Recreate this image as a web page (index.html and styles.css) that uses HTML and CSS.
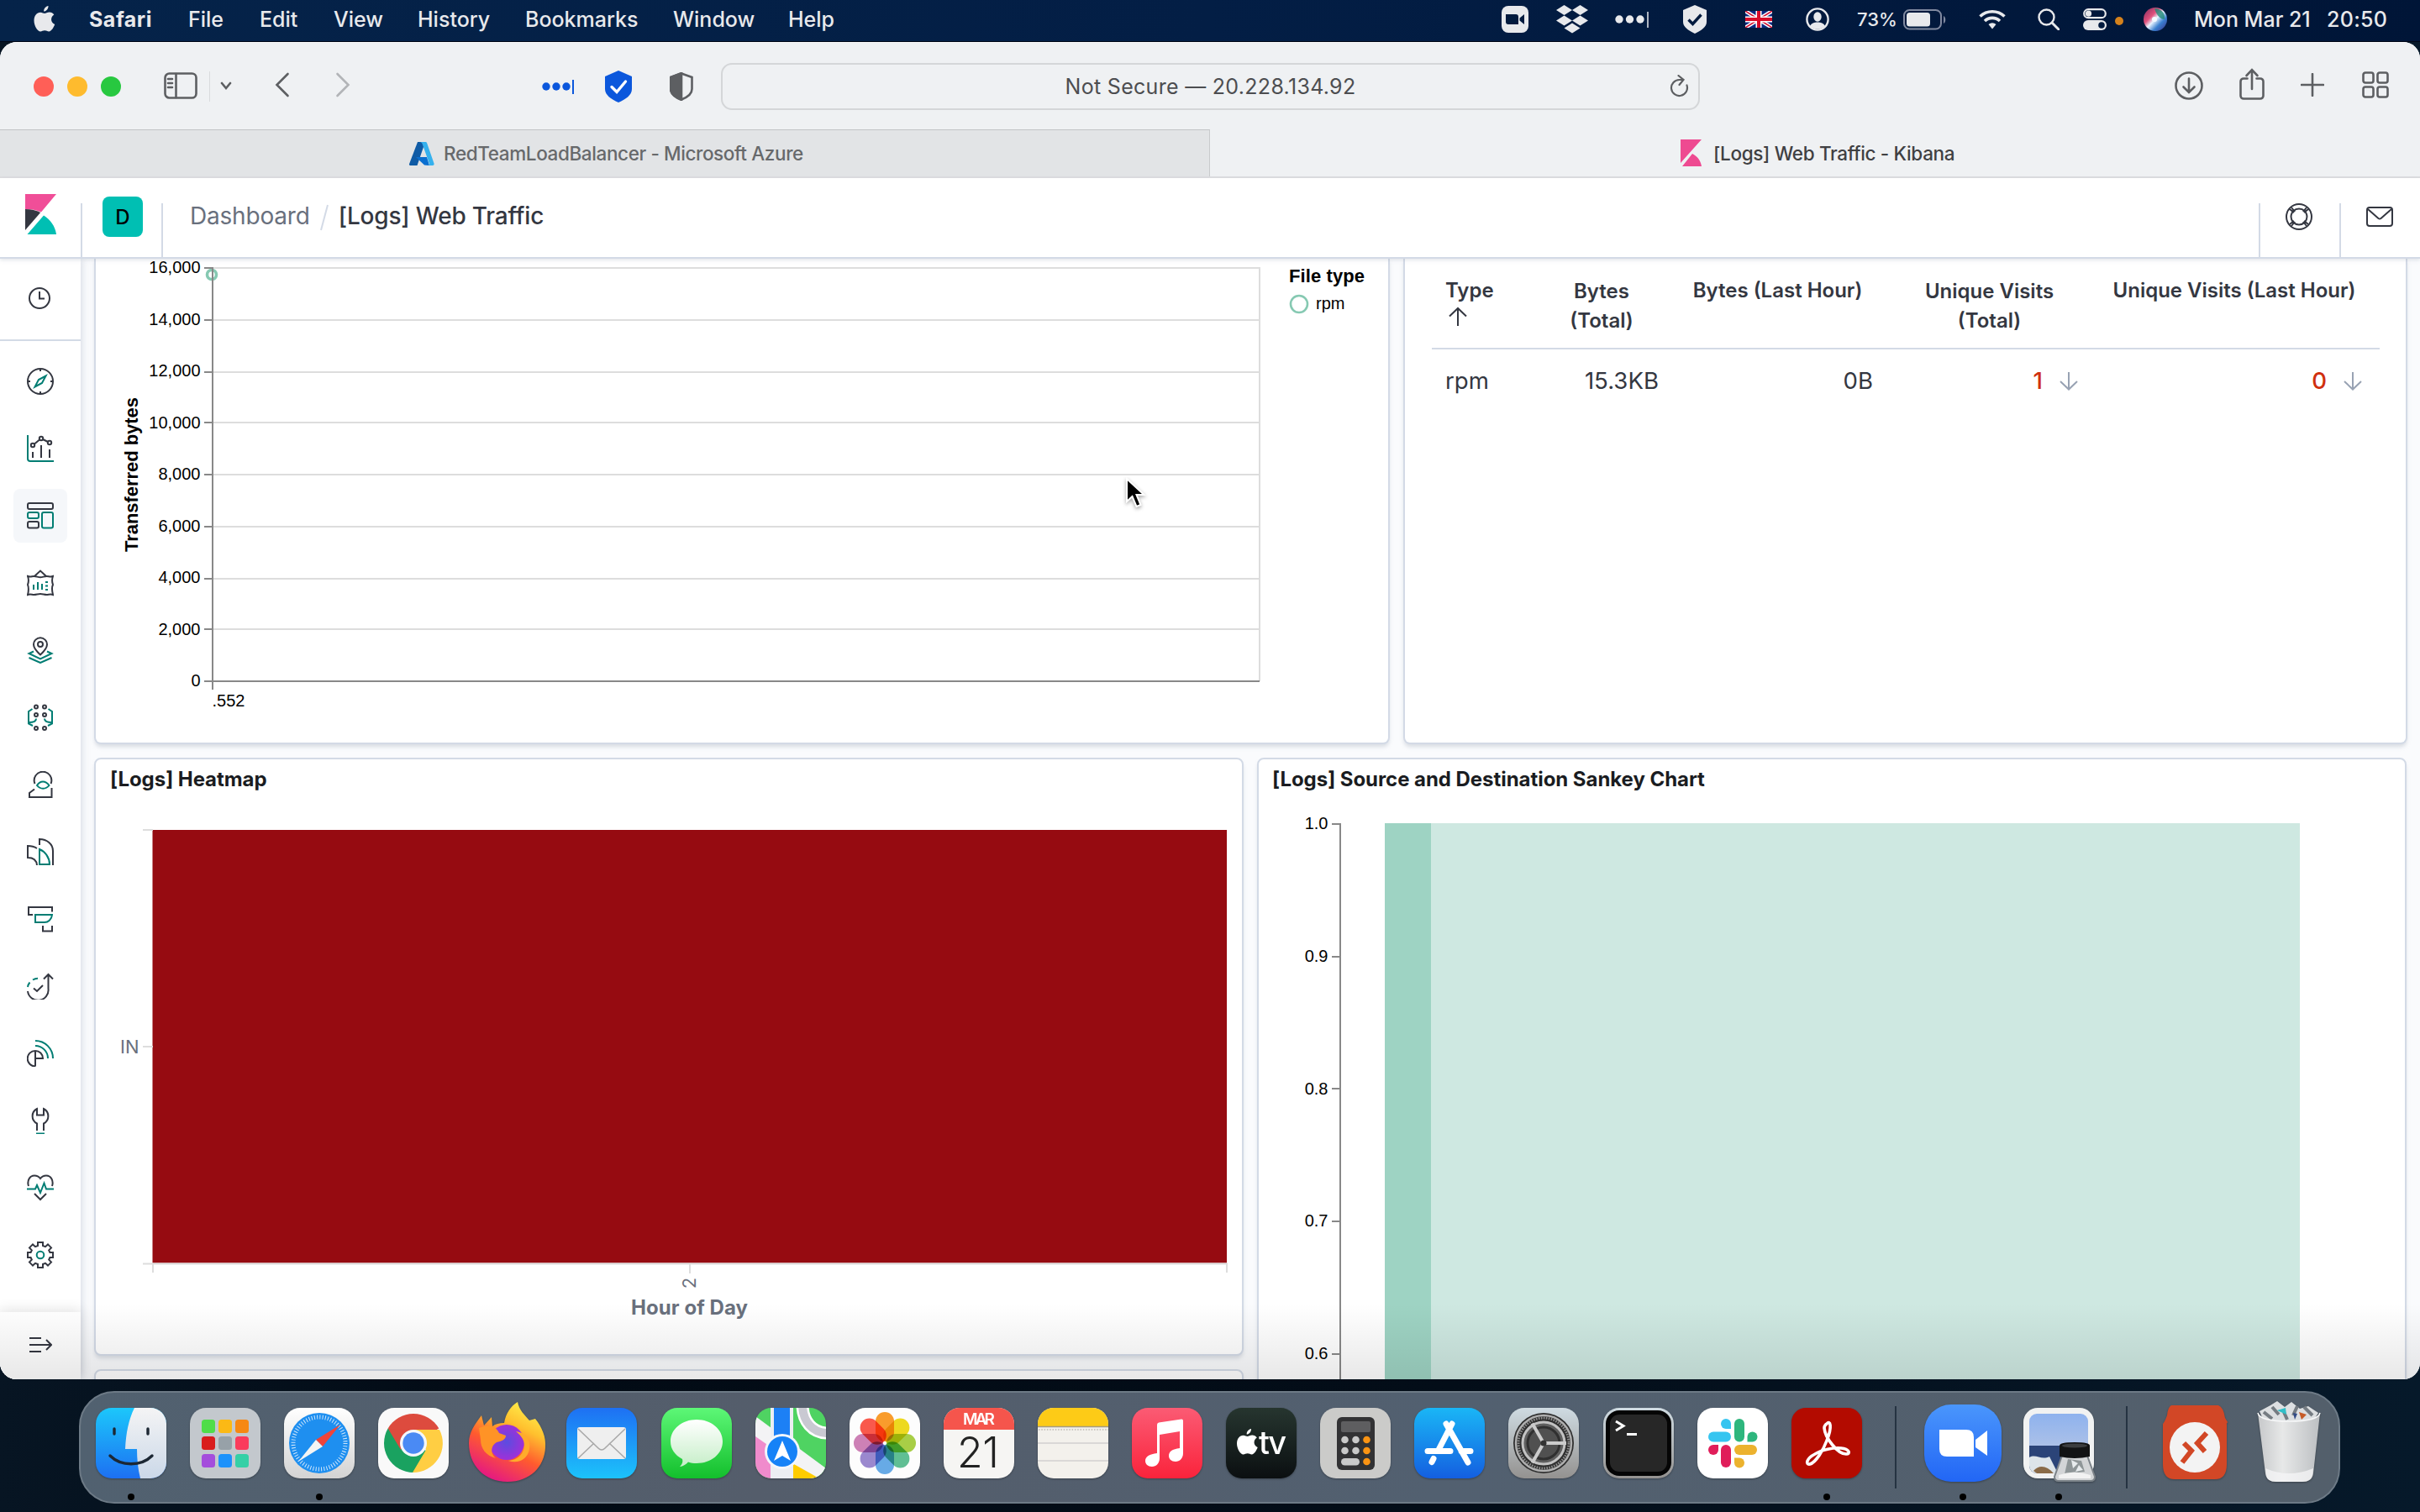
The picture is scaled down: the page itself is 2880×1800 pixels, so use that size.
FILE: index.html
```html
<!DOCTYPE html>
<html lang="en">
<head>
<meta charset="utf-8">
<title>[Logs] Web Traffic - Kibana</title>
<link rel="stylesheet" href="styles.css">
</head>
<body>
<div class="desktop">

<header class="menubar">
  <svg class="apple" viewBox="0 0 26 32"><path d="M18 0c.3 3-2.300 6.500-5.300 6.600C12.300 3.600 15 .5 18 0zM13.500 9c1.500 0 3.200-1.500 5.800-1.500 2.300.1 4.300 1.200 5.500 3-4.800 3-4 9.500.9 11.500-1 3-4 8.500-7 8.500-2 0-2.700-1.200-5-1.200S10.500 30.500 8.700 30.500C5 30.500 1 23.500 1 17.500 1 11.500 4.500 7.700 8.500 7.700c2.300 0 3.800 1.300 5 1.300z"/></svg>
  <nav class="menus">
    <span class="menu app">Safari</span><span class="menu">File</span><span class="menu">Edit</span><span class="menu">View</span><span class="menu">History</span><span class="menu">Bookmarks</span><span class="menu">Window</span><span class="menu">Help</span>
  </nav>
  <div class="status">
    <svg class="st-zoom" viewBox="0 0 32 32"><rect width="32" height="32" rx="8"/><path class="cut" d="M5 10h12a3 3 0 0 1 3 3v9H8a3 3 0 0 1-3-3zM21.500 14.500 27 10v12l-5.500-4.500z"/></svg>
    <svg class="st-drop" viewBox="0 0 38 34"><path d="M9.500 0 19 6l-9.500 6L0 6zM28.500 0 38 6l-9.500 6L19 6zM9.500 12.500l9.500 6-9.500 6-9.500-6zM28.500 12.500l9.500 6-9.500 6-9.500-6zM19 21.500l9.500 6-9.500 6-9.500-6z"/></svg>
    <svg class="st-dots" viewBox="0 0 42 20"><circle cx="5" cy="10" r="4.700"/><circle cx="17.500" cy="10" r="4.700"/><circle cx="30" cy="10" r="4.700"/><path d="M38 1h2v19h-2z" opacity=".75"/></svg>
    <svg class="st-shield" viewBox="0 0 30 34"><path d="M15 0l14 6v14c0 6-6 10-14 14C7 30 1 26 1 20V6z"/><path class="tick" d="M7.500 17.500l5 5 10-11"/></svg>
    <svg class="st-flag" viewBox="0 0 32 20"><rect width="32" height="20" fill="#0b2a80"/><path d="M0 0l32 20M32 0L0 20" stroke="#fff" stroke-width="4.500"/><path d="M0 0l32 20M32 0L0 20" stroke="#d01030" stroke-width="1.500"/><path d="M16 0v20M0 10h32" stroke="#fff" stroke-width="7"/><path d="M16 0v20M0 10h32" stroke="#d80d2a" stroke-width="4"/></svg>
    <svg class="st-user" viewBox="0 0 28 28"><circle cx="14" cy="14" r="12.600" fill="none" stroke="#e8e9ec" stroke-width="2.400"/><ellipse cx="14" cy="11" rx="4.700" ry="5.700"/><path d="M5 22c2-3.500 5-4.500 9-4.500s7 1 9 4.500c-5 5-13 5-18 0z"/></svg>
    <span class="battery-text">73%</span>
    <svg class="st-batt" viewBox="0 0 52 25"><rect x="1" y="1" width="44" height="22.500" rx="6.500" fill="none" stroke="#8089a0" stroke-width="2"/><rect x="4" y="4" width="28" height="16.500" rx="3.500"/><path d="M48 8c3 1 3 8 0 9z" fill="#8089a0"/></svg>
    <svg class="st-wifi" viewBox="0 0 34 24"><path d="M17 23.500l-4.500-5.500a7 7 0 0 1 9 0z"/><path class="arc" d="M8 14a13 13 0 0 1 18 0M2.500 8.500a21 21 0 0 1 29 0"/></svg>
    <svg class="st-search" viewBox="0 0 26 26"><circle cx="10.500" cy="10.500" r="9" fill="none" stroke="#e8e9ec" stroke-width="2.400"/><path d="M17 17l8 8" stroke="#e8e9ec" stroke-width="3" stroke-linecap="round"/></svg>
    <svg class="st-cc" viewBox="0 0 28 26"><rect x="1.200" y="1.200" width="25.600" height="10" rx="5" fill="none" stroke="#e8e9ec" stroke-width="2.200"/><circle cx="6.500" cy="6.200" r="3.600"/><rect y="14" width="28" height="12" rx="6"/><circle class="cut" cx="22" cy="20" r="3.800"/></svg>
    <span class="rec-dot"></span>
    <svg class="st-siri" viewBox="0 0 28 28"><defs><linearGradient id="siri" x1="0" y1="0" x2="1" y2="1"><stop offset="0" stop-color="#7d2a5c"/><stop offset=".35" stop-color="#e0507c"/><stop offset=".5" stop-color="#e9f4ff"/><stop offset=".7" stop-color="#3a7fd0"/><stop offset="1" stop-color="#3b2a80"/></linearGradient></defs><circle cx="14" cy="14" r="14" fill="url(#siri)"/><path d="M13 1c9 0 13 7 12 13-4 0-9-3-12-13z" fill="#1f8a78" opacity=".8"/><circle cx="13" cy="14" r="3" fill="#f4faff"/></svg>
    <span class="date">Mon Mar 21</span><span class="time">20:50</span>
  </div>
</header>

<main class="window">
  <div class="toolbar">
    <div class="lights"><i class="red"></i><i class="yellow"></i><i class="green"></i></div>
    <svg class="tb-side" viewBox="0 0 40 32"><rect x="1.500" y="1.500" width="37" height="29" rx="5"/><path d="M14.500 2v28M5 8h5M5 13h5M5 18h5"/></svg>
    <i class="tb-sep"></i>
    <svg class="tb-chev" viewBox="0 0 14 10"><path d="M2 2l5 6 5-6"/></svg>
    <svg class="tb-back" viewBox="0 0 18 30"><path d="M15.500 2 2.500 15l13 13"/></svg>
    <svg class="tb-fwd" viewBox="0 0 18 30"><path d="M2.500 2l13 13-13 13"/></svg>
    <svg class="tb-dots" viewBox="0 0 40 18"><circle cx="5" cy="9" r="4.700"/><circle cx="17" cy="9" r="4.700"/><circle cx="29" cy="9" r="4.700"/><path d="M36 1h2v17h-2z"/></svg>
    <svg class="tb-shield" viewBox="0 0 32 38"><path d="M16 0l16 7v15c0 7-7 12-16 16C7 34 0 29 0 22V7z" fill="#0b57dc" stroke="none"/><path d="M8 19.500l6 6L24.500 13" fill="none" stroke="#fff" stroke-width="3.400"/></svg>
    <svg class="tb-half" viewBox="0 0 28 34"><path d="M14 1.500 26.500 6v14c0 6-6 10-12.500 12.500C7.500 30 1.500 26 1.500 20V6z" fill="none" stroke="#5d5f62" stroke-width="2.600"/><path d="M14 1v32C7 30 1 26 1 20V6z" fill="#5d5f62"/></svg>
    <div class="url"><span class="url-text">Not Secure — 20.228.134.92</span><svg class="reload" viewBox="0 0 24 28"><path d="M20.500 12.500a9.500 9.500 0 1 1-9-6.500h4M10.500 1l6 5-5 6"/></svg></div>
    <svg class="tb-down" viewBox="0 0 34 34"><circle cx="17" cy="17" r="15.500"/><path d="M17 8.500v16M10.500 18.500l6.500 6.500 6.500-6.500"/></svg>
    <svg class="tb-share" viewBox="0 0 30 38"><path d="M9.500 12.500H5a3.500 3.500 0 0 0-3.500 3.500v17A3.500 3.500 0 0 0 5 36.500h20a3.500 3.500 0 0 0 3.500-3.500V16a3.500 3.500 0 0 0-3.500-3.500h-4.500M15 25V2.500M8.500 9 15 2.200 21.500 9"/></svg>
    <svg class="tb-plus" viewBox="0 0 28 28"><path d="M14 1v26M1 14h26"/></svg>
    <svg class="tb-grid" viewBox="0 0 32 32"><rect x="1.500" y="1.500" width="12" height="12" rx="2.500"/><rect x="18.500" y="1.500" width="12" height="12" rx="2.500"/><rect x="1.500" y="18.500" width="12" height="12" rx="2.500"/><rect x="18.500" y="18.500" width="12" height="12" rx="2.500"/></svg>
  </div>

  <div class="tabs">
    <div class="tab idle">
      <svg class="fav-azure" viewBox="0 0 30 28"><path d="M10 0h9L9.500 28H1.500a1.500 1.500 0 0 1-1.400-2z" fill="#0f5ba5"/><path d="M21 18H8l10 9.500 6 .5z" fill="#0a6fd0"/><path d="M19.500 0H10c5 0 5 1 5.500 2l8.500 24c.4 1-.3 2-1.500 2H28c1 0 2-1 1.500-2.500L21 1c-.3-.6-.8-1-1.500-1z" fill="#35b1ee"/></svg>
      <span class="tab-azure">RedTeamLoadBalancer - Microsoft Azure</span>
    </div>
    <div class="tab current">
      <svg class="fav-kib" viewBox="0 0 25 32"><path d="M0 0h25L0 28zM2 32 14 17c6 3 10 8 11 15z" fill="#ee4a91"/></svg>
      <span class="tab-kib">[Logs] Web Traffic - Kibana</span>
    </div>
  </div>

  <div class="kheader">
    <div class="klogo"><svg viewBox="0 0 37 48"><path d="M0 0h37L19 21.500C14 19 7 18 0 18z" fill="#f04e98"/><path d="M0 18c7 0 13 1.200 18.200 4L0 43z" fill="#343741"/><path d="M22 25.500C30 30.500 35.500 38 37 48H2.500z" fill="#00bfb3"/></svg></div>
    <div class="kspace"><span class="avatar">D</span></div>
    <div class="crumbs"><span class="crumb">Dashboard</span><svg class="slash" viewBox="0 0 10 32"><path d="M9 1 1 31"/></svg><span class="crumb last">[Logs] Web Traffic</span></div>
    <div class="kbtn"><svg viewBox="0 0 32 32"><circle cx="16" cy="16" r="15"/><circle cx="16" cy="16" r="9.500"/><path d="M5 7l5 4M7 5l4 5M27 7l-5 4M25 5l-4 5M5 25l5-4M7 27l4-5M27 25l-5-4M25 27l-4-5"/></svg></div>
    <div class="kbtn"><svg viewBox="0 0 32 32"><rect x="1" y="5" width="30" height="22" rx="3"/><path d="M2 7l12.500 11a2.500 2.500 0 0 0 3 0L30 7"/></svg></div>
  </div>

  <div class="body">
    <aside class="side">
      <div class="recent"><svg viewBox="0 0 28 28"><circle cx="14" cy="14" r="12"/><path d="M14 6v8.500h6"/></svg></div>
      <nav class="apps">
        <a class="item"><svg viewBox="0 0 32 32"><circle cx="16" cy="16" r="15"/><path d="M16 1v3M16 28v3M1 16h3M28 16h3"/><path class="t" d="M22.500 9.500 18 18l-8.500 4.500L14 14z"/></svg></a>
        <a class="item"><svg viewBox="0 0 32 32"><path class="t" d="M1 0v28a3 3 0 0 0 3 3h28"/><path d="M7 20v7M17 12v15M27 17v10M9 10.500l6-5M19 5l6 3"/><circle cx="7" cy="12" r="2.200"/><circle cx="17" cy="4" r="2.200"/><circle cx="27" cy="9" r="2.200"/></svg></a>
        <a class="item on"><svg viewBox="0 0 32 32"><rect x="1" y="1" width="30" height="7" rx="2"/><rect class="t" x="1" y="12" width="13" height="7" rx="2"/><rect x="1" y="23" width="13" height="7.500" rx="2"/><rect class="t" x="18" y="12" width="13" height="18.500" rx="2"/></svg></a>
        <a class="item"><svg viewBox="0 0 32 32"><path d="M9 8l7-6.500L23 8M1 8c3 1.500 5 0 7.500 0s5 1.300 7.500 1.300S21 8 23.500 8 28 9.500 31 8c-1.500 4-1.500 6 0 10-1.500 3-1.500 6 0 12-3-1.500-5 0-7.500 0s-5-1-7.500-1-5 1-7.500 1S4 28.500 1 30c1.500-6 1.500-8 0-12 1.500-4 1.500-6 0-10z"/><path class="t" d="M8 18v6M13 15v9M18 17v7"/><path class="t" d="M22 15h3M22 19.500h3M22 24h3"/></svg></a>
        <a class="item"><svg viewBox="0 0 32 32"><path d="M16 21.500C11 17 8 13.500 8 9.300a8 8 0 0 1 16 0c0 4.200-3 7.700-8 12.200z"/><circle cx="16" cy="9" r="3"/><path class="t" d="M8 17.500 2.500 20 16 26.500 29.500 20 24 17.500M2.500 25 16 31l13.500-6"/></svg></a>
        <a class="item"><svg viewBox="0 0 32 32"><circle cx="11" cy="3.500" r="2"/><circle cx="21" cy="3.500" r="2"/><circle cx="11" cy="13" r="2"/><circle cx="21" cy="13" r="2"/><circle cx="11" cy="29" r="2"/><circle cx="21" cy="29" r="2"/><path class="t" d="M6.500 6 2 9v14.500L7 26M2 22c5 0 9-1 9-4.500M25.500 6 30 9v14.500L25 26M30 22c-5 0-9-1-9-4.500"/></svg></a>
        <a class="item"><svg viewBox="0 0 32 32"><path d="M9.500 15A10.300 10.300 0 1 1 28.500 15M9 21.500 3 26v5h26.500V20"/><path class="t" d="M12 17c4-6 10-6 14.500 0-4 5-10.500 5-14.500 0z"/></svg></a>
        <a class="item"><svg viewBox="0 0 32 32"><path d="M15 8V1c9 0 16 6 16 14v17M12 12C9 10 5 9 1 9v14c6 0 10.500 3 11 9"/><path class="t" d="M15 13v18h12c0-8-5-15-12-18z"/></svg></a>
        <a class="item"><svg viewBox="0 0 32 32"><path d="M7 11H2V2h28v5.500M19 24v6.500h11V24"/><path class="t" d="M10 11h20c-.5 6-5 9-9 9H10z"/></svg></a>
        <a class="item"><svg viewBox="0 0 32 32"><path d="M25.500 2v17A12.300 12.300 0 0 1 1 22M20 7.500 25.500 2 31 7.500M8 18.500l4 3.500 7-7"/><path class="t" d="M1 17c.3-2 1.200-4 2.500-5.500M7 8.500c2-1.300 4-1.800 6-1.800"/></svg></a>
        <a class="item"><svg viewBox="0 0 32 32"><path class="t" d="M10 1a21 21 0 0 1 21 21M10 7a15 15 0 0 1 15 15"/><path d="M10 31.500a9.300 9.300 0 0 1 0-18.600c5 0 9 4 9 9.100H10M10 13v18.500"/></svg></a>
        <a class="item"><svg viewBox="0 0 32 32"><path d="M12 28v-8.500A9.800 9.800 0 0 1 12 2v7.500h8V2a9.800 9.800 0 0 1 0 17.500V28"/><path class="t" d="M11 31.500h10"/></svg></a>
        <a class="item"><svg viewBox="0 0 32 32"><path d="M2 14C0 8 3 1.500 9 1.500c4 0 5.500 1.500 7 3.500 1.500-2 3-3.500 7-3.500 6 0 9 6.500 7 12.500M9 23l7 7 7-7"/><path class="t" d="M0 17.500h10l2-4.500 4 9 4.500-11.500 2.500 7h9"/></svg></a>
        <a class="item"><svg viewBox="0 0 32 32"><path d="M13 1h6v4l3 1.200 3-2.800 4 4-2.800 3L27.400 13H31v6h-3.600l-1.200 2.600 2.800 3-4 4-3-2.800-3 1.200v4h-6v-4l-3-1.200-3 2.800-4-4 2.800-3L4.600 19H1v-6h3.600l1.200-2.600-2.800-3 4-4 3 2.800 3-1.200z"/><circle class="t" cx="16" cy="16" r="4.300"/></svg></a>
      </nav>
      <div class="collapse"><svg viewBox="0 0 28 20"><path d="M1 2h14M1 10h26M1 18h14M21 4l6 6-6 6"/></svg></div>
    </aside>

    <section class="dash">
      <div class="row top">
        <article class="panel scatter">
          <svg viewBox="114 308 1538 575">
            <path class="grid" d="M253 319h1246M253 381h1246M253 443h1246M253 503h1246M253 565h1246M253 627h1246M253 689h1246M253 749h1246M1499 318v493"/>
            <circle class="pt" cx="252" cy="327" r="5.500"/>
            <path class="axis" d="M253 318v503M252 811h1247M243 319h10M243 381h10M243 443h10M243 503h10M243 565h10M243 627h10M243 689h10M243 749h10M243 811h10"/>
            <g class="ylab"><text x="238.500" y="325">16,000</text><text x="238.500" y="387">14,000</text><text x="238.500" y="448">12,000</text><text x="238.500" y="510">10,000</text><text x="238.500" y="571">8,000</text><text x="238.500" y="633">6,000</text><text x="238.500" y="694">4,000</text><text x="238.500" y="756">2,000</text><text x="238.500" y="817">0</text></g>
            <text class="lab" x="252.500" y="841">.552</text>
            <text class="labb" text-anchor="middle" textLength="184" transform="translate(164 565) rotate(-90)">Transferred bytes</text>
            <text class="labb" x="1534" y="336" textLength="90">File type</text>
            <circle class="leg" cx="1546" cy="362" r="10"/>
            <text class="lab" x="1566" y="368">rpm</text>
          </svg>
        </article>
        <article class="panel metrics">
          <div class="table">
            <div class="th left">Type<svg class="up" viewBox="0 0 24 24"><path d="M12 2v21M2 11.500 12 2l10 9.500"/></svg></div>
            <div class="th two">Bytes<br>(Total)</div>
            <div class="th one">Bytes (Last Hour)</div>
            <div class="th two">Unique Visits<br>(Total)</div>
            <div class="th one">Unique Visits (Last Hour)</div>
            <div class="td left">rpm</div>
            <div class="td">15.3KB</div>
            <div class="td">0B</div>
            <div class="td neg">1<svg class="dn" viewBox="0 0 24 24"><path d="M12 1v20M2 12l10 9.500L22 12"/></svg></div>
            <div class="td neg end">0<svg class="dn" viewBox="0 0 24 24"><path d="M12 1v20M2 12l10 9.500L22 12"/></svg></div>
          </div>
        </article>
      </div>

      <div class="row mid">
        <div class="leftcol">
          <article class="panel heat">
            <h2>[Logs] Heatmap</h2>
            <svg viewBox="114 960 1364 652">
              <rect x="181.500" y="988" width="1278.500" height="515.500" fill="#960b11"/>
              <path class="grid" d="M170 988h12M170 1246h12M170 1504.500h1291M182 1504v11M821 1504v12M1460 1504v11"/>
              <text class="hx" x="143" y="1254">IN</text>
              <text class="hx" text-anchor="middle" transform="translate(828 1527.500) rotate(-90)">2</text>
              <text class="hb" x="751" y="1565" textLength="139">Hour of Day</text>
            </svg>
          </article>
          <article class="panel stub"></article>
        </div>
        <article class="panel sankey">
          <h2>[Logs] Source and Destination Sankey Chart</h2>
          <svg viewBox="1498 960 1364 682">
            <rect x="1648" y="980" width="55" height="670" fill="#9ed3c3"/>
            <rect x="1703" y="980" width="1034" height="670" fill="#cee8e1"/>
            <path class="axis" d="M1595 980v670M1585 981h10M1585 1139h10M1585 1296h10M1585 1454h10M1585 1612h10"/>
            <g class="ylab"><text x="1580.500" y="987">1.0</text><text x="1580.500" y="1145">0.9</text><text x="1580.500" y="1303">0.8</text><text x="1580.500" y="1460">0.7</text><text x="1580.500" y="1618">0.6</text></g>
          </svg>
        </article>
      </div>
    </section>
  </div>
  <div class="dockshade"></div>
</main>

<svg class="cursor" viewBox="0 0 26 40"><path d="M2 2v27l6.500-6 5 12 5-2-5-12h9z" fill="#000" stroke="#fff" stroke-width="2"/></svg>

<footer class="dockwrap">
<div class="dock">
  <svg class="ic" viewBox="0 0 84 84"><defs><linearGradient id="gb" x2="0" y2="1"><stop stop-color="#1cc7fb"/><stop offset="1" stop-color="#1d70f2"/></linearGradient><linearGradient id="gw" x2="0" y2="1"><stop stop-color="#f4f4f5"/><stop offset="1" stop-color="#cbd8e8"/></linearGradient><clipPath id="sq"><rect width="84" height="84" rx="19"/></clipPath></defs><g clip-path="url(#sq)"><rect width="84" height="84" fill="url(#gb)"/><path d="M46 0h38v84H53c-3-12-4-23-4-35H35C36 30 39 14 46 0z" fill="url(#gw)"/></g><path d="M22 25v6M62 25v6M17 57c13 13 37 13 50 0" fill="none" stroke="#1c2733" stroke-width="3.400" stroke-linecap="round"/></svg>
  <svg class="ic" viewBox="0 0 84 84"><rect width="84" height="84" rx="19" fill="#c3c8cd"/><rect x="14" y="14" width="16" height="16" rx="3.500" fill="#4fdd49"/><rect x="34" y="14" width="16" height="16" rx="3.500" fill="#fbb915"/><rect x="54" y="14" width="16" height="16" rx="3.500" fill="#f68813"/><rect x="14" y="34" width="16" height="16" rx="3.500" fill="#d91c1c"/><rect x="34" y="34" width="16" height="16" rx="3.500" fill="#97a1a8"/><rect x="54" y="34" width="16" height="16" rx="3.500" fill="#fa3b5c"/><rect x="14" y="55" width="16" height="16" rx="3.500" fill="#a44ddc"/><rect x="34" y="55" width="16" height="16" rx="3.500" fill="#1d92fb"/><rect x="54" y="55" width="16" height="16" rx="3.500" fill="#35d0a6"/></svg>
  <svg class="ic" viewBox="0 0 84 84"><defs><linearGradient id="sf" x2="0" y2="1"><stop stop-color="#fff"/><stop offset="1" stop-color="#d3d3d3"/></linearGradient></defs><rect width="84" height="84" rx="19" fill="url(#sf)"/><circle cx="42" cy="42" r="36" fill="#1e8ff0"/><circle cx="42" cy="42" r="31" fill="none" stroke="#cfe6fb" stroke-width="5" stroke-dasharray="1 2.250"/><path d="M67 20 38 38l8 8z" fill="#f0443a"/><path d="M17 64l21-26 8 8z" fill="#f4f4f4"/></svg>
  <svg class="ic" viewBox="0 0 84 84"><rect width="84" height="84" rx="19" fill="#f9f9f9"/><path d="M42 42 11.700 24.500a35 35 0 0 1 60.600 0z" fill="#dd4b3e"/><path d="M42 42 11.700 24.500A35 35 0 0 0 42 77l15-26z" fill="#1aa260"/><path d="M42 26h31A35 35 0 0 1 41 77l16-27z" fill="#ffce43"/><path d="M12 25 27 50l15-24z" fill="#dd4b3e"/><circle cx="42" cy="42" r="16" fill="#f5f7fb"/><circle cx="42" cy="42" r="12.700" fill="#4a8af4"/></svg>
  <svg class="ic" viewBox="0 0 84 84"><defs><linearGradient id="ff" x1=".8" y1="0" x2=".3" y2="1"><stop stop-color="#fff44f"/><stop offset=".3" stop-color="#ffc02e"/><stop offset=".6" stop-color="#ff5b2e"/><stop offset="1" stop-color="#e31587"/></linearGradient><radialGradient id="fp"><stop stop-color="#5b4ce0"/><stop offset="1" stop-color="#9f30d8"/></radialGradient></defs><path d="M54-7c2 10 8 15 14 22l7-2c8 10 13 22 12 34C86 70 69 88 42 88 14 88-4 68-4 42-4 29 3 20 11 9l3 12 9-10 1 11c4-3 8-4 14-4 2-12 8-20 16-25z" fill="url(#ff)"/><circle cx="41" cy="41" r="21" fill="url(#fp)"/><path d="M8 24c10-4 20-3 24 6l8 3c0 5-6 7-11 8-7 4-8 13-1 19-12-3-18-12-18-22z" fill="#ff9326"/><path d="M52 28c12 2 18 10 16 21-2 12-13 18-25 14 12-1 19-10 19-18 0-7-4-12-10-17z" fill="#ffab2b"/></svg>
  <svg class="ic" viewBox="0 0 84 84"><defs><linearGradient id="ml" x2="0" y2="1"><stop stop-color="#1e70f3"/><stop offset="1" stop-color="#1cc3fb"/></linearGradient></defs><rect width="84" height="84" rx="19" fill="url(#ml)"/><rect x="13" y="23" width="58" height="38" rx="3" fill="#efefef"/><path d="M14 25l24 23q4 4 8 0l24-23M14 60l19-18M70 60 51 42" fill="none" stroke="#a9a9a9" stroke-width="1.600"/></svg>
  <svg class="ic" viewBox="0 0 84 84"><defs><linearGradient id="gm" x2="0" y2="1"><stop stop-color="#5df777"/><stop offset="1" stop-color="#13bf2c"/></linearGradient><linearGradient id="gm2" x2="0" y2="1"><stop stop-color="#fff"/><stop offset="1" stop-color="#c6eec8"/></linearGradient></defs><rect width="84" height="84" rx="19" fill="url(#gm)"/><path d="M42 14c17 0 31 11 31 26S59 66 42 66c-4 0-7-.5-10-1.500-2 2-5 5-10 5.500 3-3 4-6 3-9-9-5-14-12-14-21 0-15 14-26 31-26z" fill="url(#gm2)"/></svg>
  <svg class="ic" viewBox="0 0 84 84"><g clip-path="url(#sq)"><rect width="84" height="84" fill="#4fd362"/><path d="M0 10l84 62v12H40L0 42z" fill="#f3f3f5"/><path d="M0 34l20 14v36H0z" fill="#f08bcc"/><path d="M44 66l32 18H44z" fill="#fc0"/><path d="M18-2h27v88H18z" fill="#eceef2"/><path d="M22-2h19v44H22z" fill="#1c80f5"/><path d="M56-4c0 20 12 34 30 34" fill="none" stroke="#fff" stroke-width="15"/><path d="M56-4c0 20 12 34 30 34" fill="none" stroke="#c9c9d2" stroke-width="10"/></g><circle cx="32" cy="52" r="21" fill="#f3f6fb"/><circle cx="32" cy="52" r="18" fill="#1682f7"/><path d="M32 39l10 24-10-6-10 6z" fill="#fff"/></svg>
  <svg class="ic" viewBox="0 0 84 84"><rect width="84" height="84" rx="19" fill="#fdfdfd"/><g class="petals"><rect x="31" y="5" width="22" height="35" rx="11" fill="#fb9d2c"/><rect x="31" y="5" width="22" height="35" rx="11" fill="#efdb20" transform="rotate(45 42 42)"/><rect x="31" y="5" width="22" height="35" rx="11" fill="#a9d046" transform="rotate(90 42 42)"/><rect x="31" y="5" width="22" height="35" rx="11" fill="#61c195" transform="rotate(135 42 42)"/><rect x="31" y="5" width="22" height="35" rx="11" fill="#68ace8" transform="rotate(180 42 42)"/><rect x="31" y="5" width="22" height="35" rx="11" fill="#9b89d0" transform="rotate(225 42 42)"/><rect x="31" y="5" width="22" height="35" rx="11" fill="#cf82b8" transform="rotate(270 42 42)"/><rect x="31" y="5" width="22" height="35" rx="11" fill="#fb5a4c" transform="rotate(315 42 42)"/></g></svg>
  <svg class="ic" viewBox="0 0 84 84"><g clip-path="url(#sq)"><rect width="84" height="84" fill="#f6f5f3"/><rect width="84" height="26" fill="#f5554c"/></g><text class="cal-m" x="42" y="20" text-anchor="middle" textLength="38">MAR</text><text class="cal-d" x="41" y="71" text-anchor="middle" textLength="50">21</text></svg>
  <svg class="ic" viewBox="0 0 84 84"><g clip-path="url(#sq)"><rect width="84" height="84" fill="#f3f1ec"/><rect width="84" height="22" fill="#fdcb17"/><path d="M0 22.500h84" stroke="#a49b83" stroke-width="1.500"/><path d="M0 42h84M0 63h84" stroke="#d2d0cf" stroke-width="1.600"/><path d="M1 26h84" stroke="#bdb9b2" stroke-width="1.500" stroke-dasharray="1.500 1.800"/></g></svg>
  <svg class="ic" viewBox="0 0 84 84"><defs><linearGradient id="mu" x2="0" y2="1"><stop stop-color="#fb5b74"/><stop offset="1" stop-color="#fa233b"/></linearGradient></defs><rect width="84" height="84" rx="19" fill="url(#mu)"/><path d="M30 20q0-2 2-2.500l27-4q2-.3 2 2V54c0 6-4 10-9 10s-8-3-8-7c0-5 4-8 13-9V28l-24 4v28c0 6-4 10-9 10s-8-3-8-7c0-5 5-8 14-9z" fill="#fff"/></svg>
  <svg class="ic" viewBox="0 0 84 84"><defs><linearGradient id="tv" x2="0" y2="1"><stop stop-color="#26352f"/><stop offset="1" stop-color="#0b0f11"/></linearGradient></defs><rect width="84" height="84" rx="19" fill="url(#tv)"/><path transform="translate(12 25)" d="M18 0c.3 3-2.300 6.500-5.300 6.600C12.300 3.600 15 .5 18 0zM13.500 9c1.500 0 3.200-1.500 5.800-1.500 2.300.1 4.300 1.200 5.500 3-4.800 3-4 9.500.9 11.500-1 3-4 8.500-7 8.500-2 0-2.700-1.200-5-1.200S10.500 30.500 8.700 30.500C5 30.500 1 23.500 1 17.500 1 11.500 4.500 7.700 8.500 7.700c2.300 0 3.800 1.300 5 1.300z" fill="#fff"/><text class="tvt" x="39" y="55" textLength="33">tv</text></svg>
  <svg class="ic" viewBox="0 0 84 84"><rect width="84" height="84" rx="19" fill="#cbcbc9"/><rect x="20" y="11" width="45" height="63" rx="6" fill="#323234"/><rect x="25" y="16" width="35" height="13" rx="2" fill="#5e5e60"/><g fill="#c9c9c9"><circle cx="29.500" cy="38" r="4.300"/><circle cx="42.500" cy="38" r="4.300"/><circle cx="29.500" cy="51" r="4.300"/><circle cx="42.500" cy="51" r="4.300"/><rect x="25" y="60" width="22" height="8.600" rx="4.300"/></g><g fill="#fb9413"><circle cx="55.500" cy="38" r="4.300"/><circle cx="55.500" cy="51" r="4.300"/><circle cx="55.500" cy="64" r="4.300"/></g></svg>
  <svg class="ic" viewBox="0 0 84 84"><defs><linearGradient id="as" x2="0" y2="1"><stop stop-color="#1ab6f6"/><stop offset="1" stop-color="#145fe0"/></linearGradient></defs><rect width="84" height="84" rx="19" fill="url(#as)"/><path d="M45 19 29 50M38 19l26 46M16 51.500h27M56 51.500h11M23 60.500l-2 4" fill="none" stroke="#fff" stroke-width="7" stroke-linecap="round"/></svg>
  <svg class="ic" viewBox="0 0 84 84"><defs><linearGradient id="pr" x2="0" y2="1"><stop stop-color="#cfdbe2"/><stop offset="1" stop-color="#949290"/></linearGradient></defs><rect width="84" height="84" rx="19" fill="url(#pr)"/><circle cx="42" cy="42" r="36" fill="#2e2e2e"/><circle cx="42" cy="42" r="33" fill="none" stroke="#b0b0b0" stroke-width="2.500"/><circle cx="42" cy="42" r="30" fill="none" stroke="#8d8d8d" stroke-width="3" stroke-dasharray="1.600 1.400"/><circle cx="42" cy="42" r="25" fill="#5f5f5f" stroke="#c2c2c2" stroke-width="3"/><circle cx="42" cy="42" r="19" fill="#505050" stroke="#303030" stroke-width="3"/><path d="M42 42h27M42 42 28.500 18.600M42 42 28.500 65.400" stroke="#cbcbcb" stroke-width="4"/><circle cx="42" cy="42" r="3.500" fill="#333"/></svg>
  <svg class="ic" viewBox="0 0 84 84"><rect width="84" height="84" rx="19" fill="url(#pr)"/><rect x="3" y="3" width="78" height="78" rx="16" fill="#050505"/><rect x="8" y="8" width="68" height="68" rx="11" fill="#272727"/><path d="M15 16l9 5.500-9 5.500M28 31.500h12" fill="none" stroke="#fff" stroke-width="3"/></svg>
  <svg class="ic" viewBox="0 0 84 84"><rect width="84" height="84" rx="19" fill="#fff"/><g stroke-width="12" stroke-linecap="round"><path d="M19 34.500h15" stroke="#36c5f0"/><path d="M50 19v15.500" stroke="#2eb67d"/><path d="M65 50H50" stroke="#ecb22e"/><path d="M34 65V50" stroke="#e01e5a"/></g><path d="M40 25h-6a6 6 0 1 1 6-6z" fill="#36c5f0"/><path d="M59.500 40.500v-6a6 6 0 1 1 6 6z" fill="#2eb67d"/><path d="M44 59.500h6a6 6 0 1 1-6 6z" fill="#ecb22e"/><path d="M25 44v6a6 6 0 1 1-6-6z" fill="#e01e5a"/></svg>
  <svg class="ic" viewBox="0 0 84 84"><rect width="84" height="84" rx="17" fill="#b30b00"/><path d="M42 19c4-5 7 3 0 20-4 11-13 26-20 28-6 1-4-7 6-12 8-5 22-8 31-7 10 1 12 7 6 7C55 55 40 36 39 24q0-3 3-5z" fill="none" stroke="#fff" stroke-width="3.600"/></svg>
  <i class="sep s1"></i>
  <svg class="ic" viewBox="0 0 84 84"><defs><linearGradient id="zm" x2="0" y2="1"><stop stop-color="#4a96fc"/><stop offset="1" stop-color="#2266f5"/></linearGradient></defs><rect x="-4" y="-4" width="92" height="92" rx="32" fill="url(#zm)"/><path d="M14 26h32q9 0 9 9v23H23q-9 0-9-9zM57 38l14-11v30L57 47z" fill="#fff"/></svg>
  <svg class="ic pv" viewBox="0 0 84 84"><defs><linearGradient id="sky" x2="0" y2="1"><stop stop-color="#8eb2ee"/><stop offset="1" stop-color="#b4c5e6"/></linearGradient></defs><rect width="84" height="84" rx="17" fill="#f1f2f2"/><rect x="7" y="7" width="70" height="50" rx="9" fill="url(#sky)"/><path d="M7 45h70v24a9 9 0 0 1-9 9H16a9 9 0 0 1-9-9z" fill="#2b4478"/><path d="M7 59c8-5 14 4 24-1l10 20H16a9 9 0 0 1-9-9z" fill="#dde5ea"/><path d="M12 75c7-8 16-6 24 3H16z" fill="#8a6b48"/><path d="M46 57h30l9 25q0 5-5 5H42q-5 0-5-5z" fill="#d3d5d7" stroke="#7c8389" stroke-width="2"/><path d="M53 61l16 2 4 13-24 3z" fill="#8f9698"/><path d="M57 62l8 4-6 6zM66 68l5 6-9 2z" fill="#e8ecee"/><path d="M42 80q19-7 38 0v4H42z" fill="#f2f2f2"/><path d="M43 45q0-4 18-4t18 4v13q-18 4-36 0z" fill="#121314"/><ellipse cx="61" cy="45" rx="15" ry="2.500" fill="#3b3d3f"/></svg>
  <i class="sep s2"></i>
  <svg class="ic" viewBox="0 0 84 84"><path d="M14-3h56q6 2 8 15l3 5q-2 3-1 2v48q0 18-14 18H18Q4 85 4 67V19q2-2 5-10 1-10 5-12z" fill="#d24726"/><circle cx="42" cy="47" r="30" fill="#f3f3f3"/><path d="M29 42l9 9-11 14M56 30 45 42l9 10" fill="none" stroke="#d24726" stroke-width="6"/></svg>
  <svg class="ic" viewBox="0 0 84 84"><defs><linearGradient id="tr"><stop stop-color="#c6c8ca"/><stop offset=".4" stop-color="#e7e8e8"/><stop offset="1" stop-color="#bcbfc2"/></linearGradient></defs><path d="M7 4 20-3l8-5 9 7 8-6 10 8 10-3 12 8-8 12H13z" fill="#dcdfe1"/><path d="M12 5l10 8M22-1l8 9M36 5l4 9M52-2l-5 11M60-1l10 10" stroke="#757c82" stroke-width="4"/><path d="M28 3l10-3 1 8z" fill="#30bfc8"/><path d="M54 5l9 3-6 6z" fill="#c65c28"/><path d="M47 6l5 1-3 7z" fill="#324b86"/><path d="M5 6q2 9 36 10 36 0 38-10l-8 72q-1 10-13 10H27q-12 0-13-10z" fill="url(#tr)"/><path d="M5 6q2 10 37 10T79 6" fill="none" stroke="#f6f7f8" stroke-width="1.500"/><path d="M14 72q28 12 57 0l-1 8q-2 8-12 8H27q-11 0-12-8z" fill="#f5f6f7" opacity=".75"/></svg>
</div>
<div class="rundots"><i></i><i></i><i></i><i></i><i></i></div>
</footer>
</div>
</body>
</html>
```
FILE: styles.css
```css
* { box-sizing: border-box; }
body { margin: 0; font-family: "Inter", "Liberation Sans", sans-serif; }
svg { display: block; flex: none; }
i { display: block; flex: none; }

.desktop {
  width: 2880px; height: 1800px; overflow: hidden; position: relative;
  display: flex; flex-direction: column;
  background: linear-gradient(90deg, #071523 0, #020b15 20%, #030d18 60%, #06192a 100%);
}

/* menu bar */
.menubar {
  height: 50px; flex: none; display: flex; align-items: center; position: relative;
  background: linear-gradient(90deg, #052349, #031e45 50%, #001537);
  border-bottom: 1px solid #000716;
  color: #e8e9ec; font-size: 25px; font-weight: 500;
}
.menubar svg { fill: #e8e9ec; }
.apple { width: 27px; height: 32px; margin: -4px 0 0 39px; }
.menus {
  display: grid; margin: -3px 0 0 40px; white-space: nowrap;
  grid-template-columns: 118px 85px 88px 100px 128px 176px 137px 100px;
}
.app { font-weight: 700; letter-spacing: .5px; }
.status { display: flex; align-items: center; margin: -3px 0 0 auto; padding-right: 39px; white-space: nowrap; }
.cut { fill: #021a3e; }
.tick { fill: none; stroke: #021a3e; stroke-width: 3.4; }
.arc { fill: none; stroke: #e8e9ec; stroke-width: 3.6; }
.st-zoom { width: 32px; height: 32px; }
.st-drop { width: 38px; height: 34px; margin-left: 33px; }
.st-dots { width: 42px; height: 20px; margin-left: 32px; }
.st-shield { width: 30px; height: 34px; margin-left: 38px; }
.st-flag { width: 32px; height: 20px; margin-left: 45px; }
.st-user { width: 28px; height: 28px; margin-left: 40px; }
.battery-text { width: 54px; margin-left: 33px; font-size: 22px; }
.st-batt { width: 52px; height: 25px; margin-left: 1px; }
.st-wifi { width: 34px; height: 24px; margin-left: 37px; }
.st-search { width: 26px; height: 26px; margin-left: 37px; }
.st-cc { width: 28px; height: 26px; margin-left: 28px; }
.rec-dot { width: 10px; height: 10px; border-radius: 50%; background: #d5821c; margin: 4px 0 0 10px; }
.st-siri { width: 28px; height: 28px; margin-left: 24px; }
.date { width: 158px; margin-left: 32px; }
.time { width: 72px; letter-spacing: .3px; }

/* browser window */
.window {
  height: 1592px; flex: none; overflow: hidden; position: relative;
  display: flex; flex-direction: column;
  border-radius: 20px; background: #fff;
}
.toolbar {
  height: 104px; flex: none; display: flex; align-items: center;
  background: #eff1f3; border-top: 1px solid #fafafa;
}
.toolbar svg { fill: none; stroke: #5d5f62; stroke-width: 2.6; stroke-linecap: round; }
.lights { display: flex; gap: 16px; padding-left: 40px; }
.lights i { width: 24px; height: 24px; border-radius: 50%; }
.red { background: #ff5f57; }
.yellow { background: #febb2e; }
.green { background: #28c840; }
.tb-side { width: 40px; height: 32px; margin: -2px 0 0 51px; }
.tb-sep { width: 1px; height: 36px; background: #d9dbdd; margin-left: 14px; }
.tb-chev { width: 14px; height: 10px; margin: -2px 0 0 12px; }
.tb-back { width: 18px; height: 30px; margin: -3px 0 0 51px; }
.toolbar .tb-fwd { width: 18px; height: 30px; margin: -3px 0 0 54px; stroke: #b2b4b7; }
.toolbar .tb-dots { width: 40px; height: 18px; margin-left: 228px; fill: #0b57dc; stroke: none; }
.tb-shield { width: 32px; height: 38px; margin-left: 35px; }
.tb-half { width: 28px; height: 34px; margin-left: 45px; }
.url {
  width: 1165px; height: 56px; margin-left: 33px; border: 2px solid #d4d6d8; border-radius: 13px;
  display: flex; align-items: center; position: relative; font-size: 25px; color: #4c4d50;
}
.url-text { margin: 0 auto; white-space: nowrap; letter-spacing: .3px; }
.url .reload { position: absolute; right: 10px; width: 24px; height: 28px; stroke-width: 2.2; }
.tb-down { width: 34px; height: 34px; margin: -2px 0 0 565px; }
.tb-share { width: 30px; height: 38px; margin: -5px 0 0 43px; }
.tb-plus { width: 28px; height: 28px; margin: -3px 0 0 43px; }
.tb-grid { width: 32px; height: 32px; margin: -3px 0 0 45px; }

.tabs { height: 58px; flex: none; display: flex; border-bottom: 2px solid #dcdddf; font-size: 22.500px; }
.tab { width: 1440px; display: flex; align-items: center; white-space: nowrap; font-weight: 500; }
.tab-azure { letter-spacing: -.39px; }
.tab-kib { letter-spacing: -.34px; }
.idle { background: #e2e4e6; border-top: 1px solid #c2c4c6; border-right: 1px solid #c9cbcd; color: #67696b; padding-left: 487px; gap: 11px; }
.current { background: #eff1f3; color: #3f4042; padding-left: 560px; gap: 14px; }
.fav-azure { width: 30px; height: 28px; }
.fav-kib { width: 25px; height: 32px; }

/* kibana header */
.kheader { height: 96px; flex: none; display: flex; background: #fff; border-bottom: 2px solid #d3dae6; position: relative; z-index: 2; box-shadow: 0 2px 4px rgba(152,162,179,.25); }
.klogo, .kspace, .kbtn { background: linear-gradient(#d3dae6, #d3dae6) right bottom / 2px 64px no-repeat; }
.klogo { width: 98px; padding: 19px 0 0 30px; }
.klogo svg { width: 37px; height: 48px; }
.kspace { width: 96px; padding: 22px 0 0 24px; }
.avatar { display: flex; width: 48px; height: 48px; align-items: center; justify-content: center; border-radius: 8px; background: #00bfb3; font-size: 24px; font-weight: 500; color: #000; }
.crumbs { display: flex; flex: 1; height: 90px; align-items: center; padding-left: 32px; font-size: 28px; color: #69707d; white-space: nowrap; letter-spacing: -.2px; }
.slash { width: 10px; height: 32px; margin: 3px 12px 0; fill: none; stroke: #d3dae6; stroke-width: 2; }
.crumb.last { color: #343741; font-weight: 500; }
.kbtn { width: 96px; padding: 30px 0 0 32px; background-position: left bottom; }
.kbtn svg { width: 32px; height: 32px; fill: none; stroke: #343741; stroke-width: 2; }

.body { flex: 1; min-height: 0; display: flex; background: #fafbfd; }
.side { width: 96px; flex: none; display: flex; flex-direction: column; background: #fff; box-shadow: 0 0 10px rgba(120,135,160,.35); position: relative; z-index: 1; }
.side svg { fill: none; stroke: #343741; stroke-width: 2; }
.side .t { stroke: #017d73; }
.recent { height: 98px; flex: none; padding: 33px 0 0 33px; border-bottom: 2px solid #d3dae6; }
.recent svg { width: 28px; height: 28px; }
.apps { flex: 1; display: flex; flex-direction: column; gap: 16px; padding: 16px; }
.item { width: 64px; height: 64px; flex: none; display: flex; align-items: center; justify-content: center; border-radius: 8px; }
.item svg { width: 32px; height: 32px; }
.on { background: #f5f7fa; }
.collapse { height: 80px; flex: none; padding: 29px 0 0 34px; background: #fff; box-shadow: 0 -4px 14px rgba(0,0,0,.09); }
.collapse svg { width: 28px; height: 20px; }

/* dashboard panels */
.dash { flex: 1; min-width: 0; display: flex; flex-direction: column; gap: 16px; padding: 0 15px 0 16px; }
.row { display: flex; gap: 16px; }
.panel { background: #fff; border: 2px solid #d3dae6; border-radius: 8px; box-shadow: 0 4px 5px -1px rgba(152,162,179,.35); overflow: hidden; }
.top .panel { height: 579px; border-top: 0; border-radius: 0 0 8px 8px; margin-top: -1px; }
.scatter { width: 1542px; }
.scatter svg { width: 1538px; height: 575px; margin-top: 1px; }
.metrics { width: 1195px; padding: 24px 31px 0 32px; }
.mid { align-items: flex-start; }
.leftcol { width: 1368px; display: flex; flex-direction: column; gap: 16px; }
.heat { height: 712px; }
.heat svg { width: 1364px; height: 652px; }
.stub { height: 60px; }
.sankey { width: 1368px; height: 760px; }
.sankey svg { width: 1364px; height: 682px; }
h2 { margin: 0; height: 56px; padding: 8px 0 0 17px; font-size: 24px; line-height: 32px; font-weight: 700; color: #1a1c21; white-space: nowrap; letter-spacing: -.05px; }
.sankey h2 { padding-left: 16px; }

.grid { fill: none; stroke: #ddd; stroke-width: 2; }
.axis { fill: none; stroke: #888; stroke-width: 2; }
.pt { fill: none; stroke: #86c9b2; stroke-width: 3.6; }
.leg { fill: none; stroke: #86c9b2; stroke-width: 2.6; }
.ylab, .lab { font: 20px "Liberation Sans", sans-serif; fill: #000; }
.ylab { text-anchor: end; }
.labb { font: bold 22px "Liberation Sans", sans-serif; fill: #000; }
.hx { font-size: 22px; fill: #69707d; }
.hb { font-size: 24px; font-weight: 700; fill: #69707d; }

.table { display: grid; grid-template-columns: 118px 168px 255px 245px 342px; color: #343741; }
.th { height: 84px; margin-top: -3px; border-bottom: 2px solid #d3dae6; padding-bottom: 3px; height: 88px; text-align: center; font-size: 24px; font-weight: 600; line-height: 36px; white-space: nowrap; }
.two { padding-top: 1px; line-height: 35px; }
.left { padding-left: 16px; text-align: left; }
.one { padding-right: 4px; }
.up { width: 24px; height: 24px; margin: 1px 0 0 3px; fill: none; stroke: #343741; stroke-width: 2; }
.td { display: flex; align-items: center; justify-content: flex-end; height: 74px; padding-right: 16px; font-size: 27.600px; }
.td.left { justify-content: flex-start; }
.end { padding-right: 20px; }
.neg { color: #d0300f; gap: 19px; font-weight: 500; }
.dn { width: 24px; height: 24px; margin-top: 2px; fill: none; stroke: #98a2b3; stroke-width: 2; }

.dockshade { position: absolute; left: 0; right: 0; bottom: 0; height: 90px; z-index: 3; background: linear-gradient(rgba(0,0,0,0), rgba(0,0,0,.09)); }
.cursor { position: absolute; left: 1339px; top: 568px; width: 26px; height: 40px; filter: drop-shadow(0 2px 2px rgba(0,0,0,.35)); }

/* dock */
.dockwrap { padding: 14px 95px 0 94px; position: relative; }
.dock {
  height: 134px; display: flex; gap: 28.100px; padding: 18px 0 0 18px;
  border: 2px solid #6d7a86; border-radius: 42px;
  background: linear-gradient(90deg, #516170, #545d6b 30%, #526070 60%, #535f6b);
}
.ic { width: 84px; height: 84px; overflow: visible; filter: drop-shadow(0 1px 1px rgba(0,0,0,.3)); }
.sep { width: 2px; height: 98px; margin-top: -2px; background: #253342; }
.s1 { margin-left: 11px; margin-right: 9px; }
.s2 { margin-left: 10px; margin-right: 10px; }
.pv { margin-left: 2px; }
.petals rect { mix-blend-mode: multiply; }
.cal-m { font-size: 19px; font-weight: 600; fill: #fff; }
.cal-d { font-size: 50px; font-weight: 300; fill: #222; }
.tvt { font-size: 38px; font-weight: 500; fill: #fff; }
.rundots { position: absolute; left: 152px; top: 136px; display: flex; }
.rundots i { width: 8px; height: 8px; border-radius: 50%; background: #000; }
.rundots i:nth-child(2) { margin-left: 216px; }
.rundots i:nth-child(3) { margin-left: 1786px; }
.rundots i:nth-child(4) { margin-left: 154px; }
.rundots i:nth-child(5) { margin-left: 106px; }
```
